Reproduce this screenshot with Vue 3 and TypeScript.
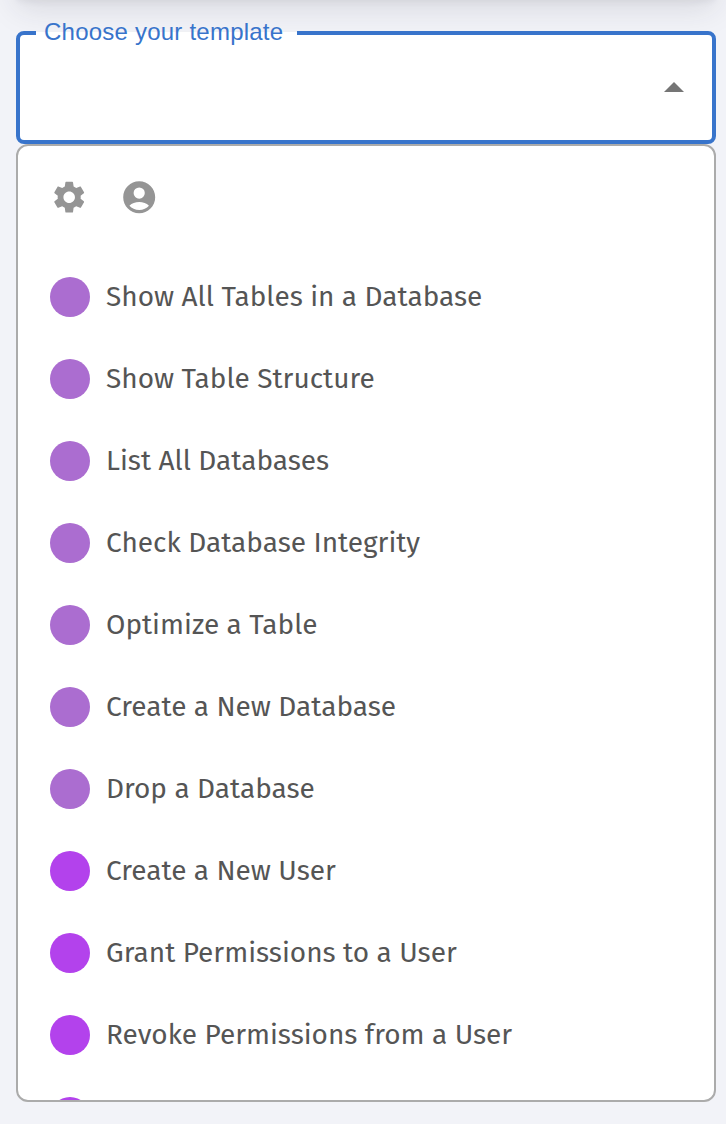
<script setup lang="ts">
interface Template {
  label: string
  kind: 'system' | 'user'
}

const templates: Template[] = [
  { label: 'Show All Tables in a Database', kind: 'system' },
  { label: 'Show Table Structure', kind: 'system' },
  { label: 'List All Databases', kind: 'system' },
  { label: 'Check Database Integrity', kind: 'system' },
  { label: 'Optimize a Table', kind: 'system' },
  { label: 'Create a New Database', kind: 'system' },
  { label: 'Drop a Database', kind: 'system' },
  { label: 'Create a New User', kind: 'user' },
  { label: 'Grant Permissions to a User', kind: 'user' },
  { label: 'Revoke Permissions from a User', kind: 'user' },
]
</script>

<template>
  <main class="page">
    <div class="panel-above"></div>
    <div class="select">
      <span class="notch"></span>
      <span class="legend">Choose your template</span>
      <svg class="arrow" viewBox="0 0 20 10"><path d="M0 10 10 0l10 10z" /></svg>
    </div>
    <section class="menu">
      <div class="filters">
        <svg class="icon" viewBox="0 0 24 24">
          <path d="M19.14 12.94c.04-.3.06-.61.06-.94 0-.32-.02-.64-.07-.94l2.03-1.58c.18-.14.23-.41.12-.61l-1.92-3.32c-.12-.22-.37-.29-.59-.22l-2.39.96c-.5-.38-1.03-.7-1.62-.94l-.36-2.54c-.04-.24-.24-.41-.48-.41h-3.84c-.24 0-.43.17-.47.41l-.36 2.54c-.59.24-1.13.57-1.62.94l-2.39-.96c-.22-.08-.47 0-.59.22L2.74 8.87c-.12.21-.08.47.12.61l2.03 1.58c-.05.3-.09.63-.09.94s.02.64.07.94l-2.03 1.58c-.18.14-.23.41-.12.61l1.92 3.32c.12.22.37.29.59.22l2.39-.96c.5.38 1.03.7 1.62.94l.36 2.54c.05.24.24.41.48.41h3.84c.24 0 .44-.17.47-.41l.36-2.54c.59-.24 1.13-.56 1.62-.94l2.39.96c.22.08.47 0 .59-.22l1.92-3.32c.12-.22.07-.47-.12-.61l-2.01-1.58zM12 15.6c-1.98 0-3.6-1.62-3.6-3.6s1.62-3.6 3.6-3.6 3.6 1.62 3.6 3.6-1.62 3.6-3.6 3.6z" />
        </svg>
        <svg class="icon" viewBox="0 0 24 24">
          <path d="M12 2C6.48 2 2 6.48 2 12s4.48 10 10 10 10-4.48 10-10S17.52 2 12 2zm0 3.900a3.500 3.500 0 1 1 0 7 3.500 3.500 0 0 1 0-7zM12 20c-2.500 0-4.700-1.100-6.100-2.700C7.400 15.800 9.600 15 12 15s4.600.8 6.100 2.300C16.700 18.900 14.500 20 12 20z" />
        </svg>
      </div>
      <ul class="list">
        <li v-for="item in templates" :key="item.label" class="item">
          <span class="dot" :class="item.kind"></span>
          <span class="label">{{ item.label }}</span>
        </li>
        <li class="item"><span class="dot user"></span></li>
      </ul>
    </section>
  </main>
</template>

<style>
body {
  background: #f2f3f8;
}
</style>

<style scoped>
.page {
  box-sizing: border-box;
  height: 1124px;
  padding: 0 10px 0 16px;
  overflow: hidden;
  background: #f2f3f8;
}
.panel-above {
  height: 40px;
  margin: -40px 0 31px;
  border-radius: 8px;
  box-shadow: 0 2px 6px rgba(40, 40, 55, 0.06), 0 8px 32px rgba(40, 40, 55, 0.13);
}
.select {
  position: relative;
  display: flex;
  align-items: center;
  justify-content: flex-end;
  box-sizing: border-box;
  height: 113px;
  padding: 0 28px 1px 0;
  border: 4px solid #3874cb;
  border-radius: 8px;
  background: #fff;
}
.notch {
  position: absolute;
  top: -4px;
  left: 16px;
  width: 261px;
  height: 4px;
  background: linear-gradient(#f0f1f4 1px, #fff 1px);
}
.legend {
  position: absolute;
  top: -17px;
  left: 24px;
  color: #3874cb;
  font: 24px/28px "Liberation Sans", Arial, sans-serif;
  letter-spacing: 0.225px;
  white-space: nowrap;
}
.arrow {
  width: 20px;
  height: 10px;
  fill: #757575;
}
.menu {
  box-sizing: border-box;
  height: 958px;
  border: 2px solid #ababab;
  border-radius: 12px;
  overflow: hidden;
  background: #fff;
}
.filters {
  display: flex;
  gap: 31.600px;
  height: 110px;
  padding: 31.800px 0 0 31.800px;
  box-sizing: border-box;
}
.icon {
  width: 38.400px;
  height: 38.400px;
  fill: #959595;
}
.list {
  margin: 0;
  padding: 0;
  list-style: none;
}
.item {
  display: flex;
  align-items: center;
  gap: 16px;
  height: 82px;
  padding-left: 32px;
}
.dot {
  width: 40px;
  height: 40px;
  border-radius: 50%;
}
.system {
  background: #ab6dd0;
}
.user {
  background: #b342ec;
}
.label {
  color: #555;
  font: 28px/40px "Fira Sans", "Noto Sans", sans-serif;
  white-space: nowrap;
}
</style>
